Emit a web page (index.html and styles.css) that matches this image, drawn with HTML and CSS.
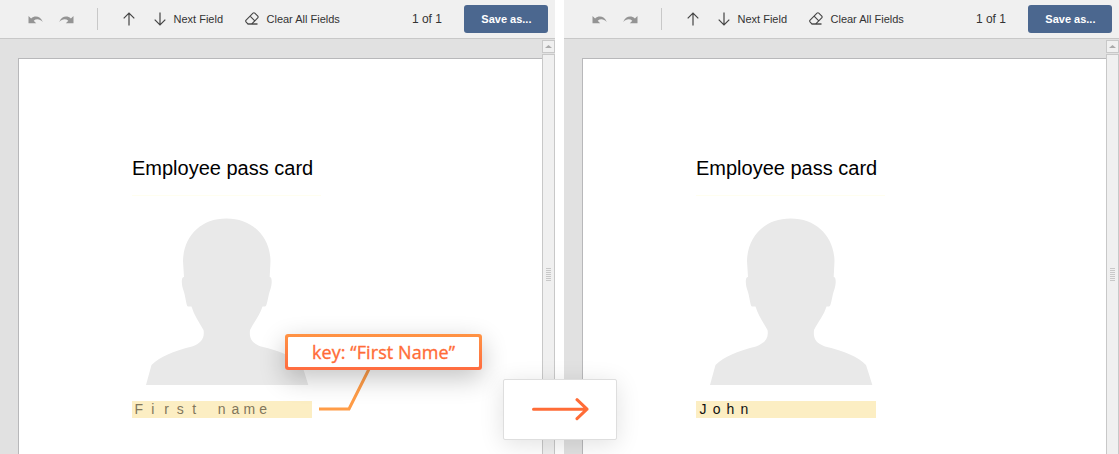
FILE: index.html
```
<!DOCTYPE html>
<html lang="en">
<head>
<meta charset="utf-8">
<title>Employee pass card</title>
<link rel="stylesheet" href="styles.css">
</head>
<body>
<svg class="defs" width="0" height="0">
  <symbol id="undo" viewBox="0 0 16 10"><path d="M.500 1v7.200h7.700L5.700 5.700C8.300 3.600 11.800 3.800 14.800 7C12.500 1 6.800.200 3.100 3.400Z" fill="#949494"/></symbol>
  <symbol id="up" viewBox="0 0 12 14"><path d="M6 13.500V1M.700 6.300L6 1l5.300 5.300" fill="none" stroke="#444" stroke-width="1.200"/></symbol>
  <symbol id="eraser" viewBox="0 0 14 13"><path d="M2.800 11.900L1 9.900Q.300 9 1.100 8.200L8 1.200Q8.900.400 9.800 1.200L12.800 4.200Q13.500 5 12.700 5.900L6.800 11.900M5.100 4.200l4.700 4.700" fill="none" stroke="#444" stroke-width="1.100"/><path d="M2.500 12h10" stroke="#333" stroke-width="1.300"/></symbol>
  <symbol id="person" viewBox="0 0 164 168"><path d="M81.500.5C108 .500 125 19 125.500 43L124.700 59C127.500 59 127 66 125.500 71C122.500 79 122.500 88 120 88.500H117.500C115 97 109 104 105 112C104 121 107 125 116 128.500C136 133 149 139 157 147Q160 156 163.300 167H1Q4 156 6.500 147C15 139 28 133 47 128.500C56 125 60 120 58.500 112C54 104 49 97 46.500 88.500H43C41 88 41 79 38 71C36.500 66 36 59 39 59L38 43C38.500 19 55 .500 81.500.5Z" fill="#e9e9e9"/></symbol>
</svg>
<main class="compare">
  <section class="editor">
    <header class="toolbar">
      <svg class="undo"><use href="#undo"/></svg>
      <svg class="undo redo"><use href="#undo"/></svg>
      <i class="divider"></i>
      <svg class="arrow"><use href="#up"/></svg>
      <svg class="arrow down"><use href="#up"/></svg>
      <span class="next">Next Field</span>
      <svg class="eraser"><use href="#eraser"/></svg>
      <span class="clear">Clear All Fields</span>
      <span class="pages">1 of 1</span>
      <button class="save">Save as...</button>
    </header>
    <div class="viewer">
      <div class="canvas">
        <article class="sheet">
          <h1>Employee pass card</h1>
          <div class="rule"></div>
          <svg class="person"><use href="#person"/></svg>
          <div class="field hint"><b>F</b><b>i</b><b>r</b><b>s</b><b>t</b><b></b><b>n</b><b>a</b><b>m</b><b>e</b></div>
        </article>
      </div>
      <div class="scroll"><div class="scroll-up"><i></i></div><div class="thumb"><i class="grip"></i></div></div>
    </div>
  </section>
  <section class="editor">
    <header class="toolbar">
      <svg class="undo"><use href="#undo"/></svg>
      <svg class="undo redo"><use href="#undo"/></svg>
      <i class="divider"></i>
      <svg class="arrow"><use href="#up"/></svg>
      <svg class="arrow down"><use href="#up"/></svg>
      <span class="next">Next Field</span>
      <svg class="eraser"><use href="#eraser"/></svg>
      <span class="clear">Clear All Fields</span>
      <span class="pages">1 of 1</span>
      <button class="save">Save as...</button>
    </header>
    <div class="viewer">
      <div class="canvas">
        <article class="sheet">
          <h1>Employee pass card</h1>
          <div class="rule"></div>
          <svg class="person"><use href="#person"/></svg>
          <div class="field"><b>J</b><b>o</b><b>h</b><b>n</b></div>
        </article>
      </div>
      <div class="scroll"><div class="scroll-up"><i></i></div><div class="thumb"><i class="grip"></i></div></div>
    </div>
  </section>
</main>
<svg class="leader" viewBox="0 0 54 44"><path d="M1 40H31L51 0" fill="none" stroke="#ff9c47" stroke-width="3"/></svg>
<div class="callout"><div class="callout-text">key: “First Name”</div></div>
<div class="transition"><svg viewBox="0 0 58 24"><path d="M2.500 12.200H56M46 2.700L56 12.200L46 21.700" fill="none" stroke="#ff6c37" stroke-width="3" stroke-linecap="round" stroke-linejoin="round"/></svg></div>
</body>
</html>
```
FILE: styles.css
```
* { box-sizing: border-box; }
body { margin: 0; width: 1119px; height: 454px; overflow: hidden; position: relative; background: #fff; font-family: "Liberation Sans", Arial, sans-serif; }
svg { display: block; flex: none; }
.defs { position: absolute; }
.compare { display: flex; gap: 9px; height: 454px; }
.editor { width: 555px; display: flex; flex-direction: column; }
.toolbar { height: 39px; flex: none; display: flex; align-items: center; padding: 0 6.600px 1px 28px; background: #f0f0f0; border-bottom: 1px solid #c8c8c8; color: #333; font-size: 11px; white-space: nowrap; }
.undo { width: 16px; height: 10px; margin-top: 2px; }
.redo { transform: scaleX(-1); margin-left: 14px; }
.divider { width: 1px; height: 22px; background: #c8c8c8; margin-left: 23px; }
.arrow { width: 12px; height: 14px; margin-left: 25px; }
.down { transform: scaleY(-1); margin-left: 19px; }
.next { width: 50px; margin-left: 7.500px; }
.eraser { width: 14px; height: 13px; margin-left: 21.500px; }
.clear { width: 74px; margin-left: 7.500px; }
.pages { margin-left: auto; margin-right: 22.500px; font-size: 12px; }
.save { width: 84px; height: 28px; padding: 0; border: 0; border-radius: 3px; background: #4b678f; color: #fff; font: bold 11px "Liberation Sans", Arial, sans-serif; }
.viewer { display: flex; flex: 1; background: #e1e1e1; }
.canvas { flex: 1; padding: 19px 0 0 18px; }
.sheet { height: 100%; border: solid #b8b8ba; border-width: 1px 0 0 1px; background: #fff; padding: 97px 0 0 113px; }
h1 { margin: 0; font-size: 20px; line-height: 24px; font-weight: normal; color: #000; white-space: nowrap; }
.rule { height: 1px; width: 189px; margin-top: 15px; background: #fffeef; }
.person { width: 164px; height: 168px; margin: 22px 0 0 12.500px; }
.field { display: flex; width: 179.500px; height: 17px; margin-top: 14.500px; background: #fceec3; color: #111; font-size: 14px; line-height: 17px; }
.field b { width: 13.800px; text-align: center; font-weight: normal; }
.hint { color: #81765b; }
.scroll { width: 13px; padding-top: 1px; display: flex; flex-direction: column; gap: 1px; }
.scroll-up { height: 13px; border: 1px solid #c8c8c8; background: #f0f0f0; display: flex; align-items: center; justify-content: center; }
.scroll-up i { width: 7px; height: 3px; background: #aaa; clip-path: polygon(50% 0, 100% 100%, 0 100%); }
.thumb { flex: 1; border: solid #c8c8c8; border-width: 1px 1px 0; background: #f0f0f0; padding: 213px 3px 0; }
.grip { display: block; width: 5px; height: 13px; background: repeating-linear-gradient(#c8c8c8 0 1px, #f0f0f0 1px 2px); }
.leader { position: absolute; left: 318px; top: 369px; width: 54px; height: 44px; }
.callout { position: absolute; left: 285px; top: 334px; width: 197px; height: 36px; padding: 3px; border-radius: 3px; background: linear-gradient(#ff9344, #ff6c40); box-shadow: 0 8px 26px rgba(0,0,0,.24); }
.callout-text { height: 30px; background: #fff; border-radius: 1px; color: #ff6c37; font: 500 18px/30px "Open Sans", sans-serif; -webkit-text-stroke: .350px #ff6c37; letter-spacing: .080px; text-align: center; white-space: nowrap; }
.transition { position: absolute; left: 503px; top: 379px; width: 114px; height: 61px; display: flex; align-items: center; justify-content: center; background: #fff; border: 1px solid #dedede; border-radius: 2px; box-shadow: 0 4px 24px rgba(0,0,0,.12); }
.transition svg { width: 58px; height: 24px; margin-top: -1px; }
```
